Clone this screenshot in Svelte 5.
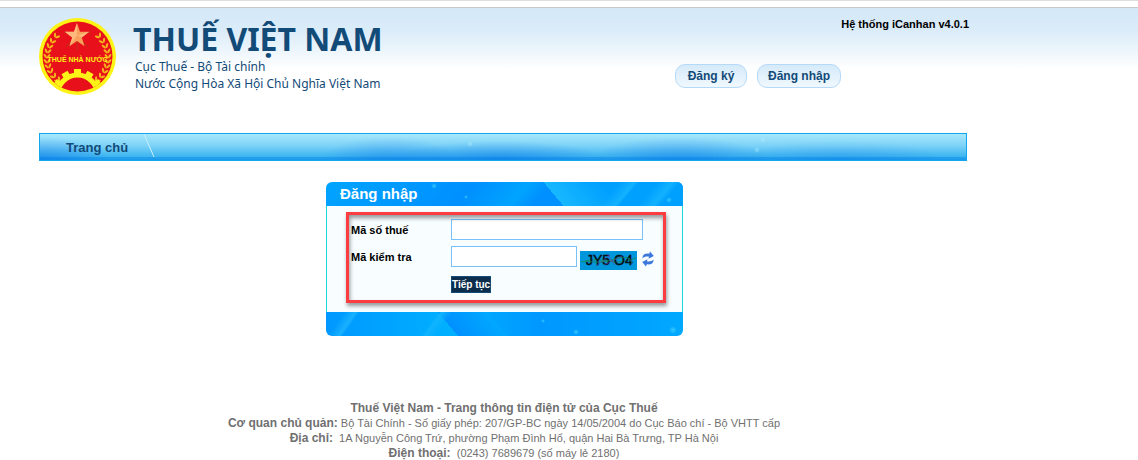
<script>
    let taxCode = '';
    let captcha = '';

    // laurel leaves, one side of the emblem (the other side is mirrored)
    const leaves = [
        [18, 17, 35], [14, 22, 28], [11, 27, 18], [9, 32, 8], [8, 37, 2],
        [8, 42, -6], [9, 47, -14], [11, 52, -24], [14, 57, -34], [18, 61, -42]
    ];
</script>

<div class="strip"></div>
<div class="page">
    <header>
        <svg class="emblem" viewBox="0 0 77 77" role="img" aria-label="Thuế Nhà nước">
            <defs>
                <clipPath id="disc"><circle cx="38.5" cy="38.5" r="35" /></clipPath>
            </defs>
            <circle cx="38.5" cy="38.5" r="38.5" fill="#fdf316" />
            <circle cx="38.5" cy="38.5" r="35" fill="#e8101a" />
            <path d="M38 17L27 29M38 17L49 29M38 17V32M38 17L25 14M38 17L52 14" stroke="#b83418" />
            <path d="M38 5l3 8.700 9.200.1-7.400 5.600 2.700 8.800-7.500-5.300-7.500 5.300 2.700-8.800-7.400-5.600 9.200-.1z" fill="#f8a05c" />
            <path d="M38 5v12.500l-7.500 10.700 2.700-8.800-7.400-5.600 9.200-.1zM38 17.500l12.200-3.700-7.400 5.600z" fill="#fdc48c" opacity=".7" />
            {#each [1, -1] as side}
                <g transform={side === 1 ? '' : 'translate(77 0) scale(-1 1)'} fill="#f6b41c">
                    {#each leaves as [x, y, turn]}
                        <g transform="translate({x} {y}) rotate({turn})">
                            <ellipse cx="-2" cy="0" rx="1.1" ry="2.6" transform="rotate(-35)" />
                            <ellipse cx="2" cy="0" rx="1.1" ry="2.6" transform="rotate(35)" />
                        </g>
                    {/each}
                </g>
            {/each}
            <g clip-path="url(#disc)">
                <circle cx="38.5" cy="77" r="20" fill="none" stroke="#fdf316" stroke-width="5" />
                {#each [-60, -30, 0, 30, 60] as turn}
                    <path d="M35 51h7v5h-7z" fill="#fdf316" transform="rotate({turn} 38.5 77)" />
                {/each}
            </g>
            <text x="38.5" y="44" text-anchor="middle">THUẾ NHÀ NƯỚC</text>
        </svg>
        <div class="brand">
            <h1>THUẾ VIỆT NAM</h1>
            <p>Cục Thuế - Bộ Tài chính</p>
            <p>Nước Cộng Hòa Xã Hội Chủ Nghĩa Việt Nam</p>
        </div>
        <div class="tools">
            <span class="version">Hệ thống iCanhan v4.0.1</span>
            <div class="account">
                <button type="button">Đăng ký</button>
                <button type="button">Đăng nhập</button>
            </div>
        </div>
    </header>

    <nav>
        <a href="#home">Trang chủ</a>
        <svg class="slash" viewBox="0 0 12 24"><path d="M1 0L11 23" stroke="#c9f0fd" /></svg>
    </nav>

    <form class="login" on:submit|preventDefault>
        <h2>Đăng nhập</h2>
        <div class="fields">
            <div class="row">
                <label for="tax-code">Mã số thuế</label>
                <input id="tax-code" class="wide" type="text" bind:value={taxCode} />
            </div>
            <div class="row">
                <label for="captcha">Mã kiểm tra</label>
                <input id="captcha" type="text" bind:value={captcha} />
                <svg class="captcha" viewBox="0 0 57 19">
                    <rect width="57" height="19" fill="#0096dc" />
                    <path d="M1 11Q14 7 27 10T56 7" fill="none" stroke="#158f68" />
                    <text x="6" y="14">JY5 O4</text>
                    <path d="M16 15L30 4M27 3l8 11M24 14l18-9" fill="none" stroke="#5944a8" stroke-width=".7" />
                    <path d="M5 10Q20 13 35 8T52 12" fill="none" stroke="#207f55" stroke-width=".8" />
                </svg>
                <button type="button" class="refresh" aria-label="Đổi mã kiểm tra">
                    <svg viewBox="0 0 12 16">
                        <path d="M.5 7.500C.3 3.700 3 2 7.200 2.700L8 .500 11.800 5 6.500 7.700l.5-2C4.500 5.200 2.200 5.700.5 7.500z" fill="#3c78dc" />
                        <path d="M11.500 8.500c.2 3.800-2.500 5.500-6.700 4.800L4 15.500.2 11l5.300-2.700-.5 2c2.500.5 4.800 0 6.500-1.800z" fill="#3c78dc" />
                    </svg>
                </button>
            </div>
            <div class="row">
                <button type="submit" class="submit">Tiếp tục</button>
            </div>
            <div class="marker"></div>
        </div>
        <div class="base"></div>
    </form>

    <footer>
        <p><b>Thuế Việt Nam - Trang thông tin điện tử của Cục Thuế</b></p>
        <p><b>Cơ quan chủ quản:</b> Bộ Tài Chính - Số giấy phép: 207/GP-BC ngày 14/05/2004 do Cục Báo chí - Bộ VHTT cấp</p>
        <p><b>Địa chỉ:</b>&nbsp; 1A Nguyễn Công Trứ, phường Phạm Đình Hổ, quận Hai Bà Trưng, TP Hà Nội</p>
        <p><b>Điện thoại:</b>&nbsp; (0243) 7689679 (số máy lẻ 2180)</p>
    </footer>
</div>

<style>
    :global(body) {
        margin: 0;
        background: #fff;
        font-family: "Liberation Sans", Arial, sans-serif;
        font-size: 11px;
    }

    .strip {
        height: 6px;
        border-top: 1px solid #dedede;
        border-bottom: 1px solid #c8c8c8;
    }

    .page {
        padding-left: 39px;
        background: linear-gradient(#d3e8f8, #dcecf9 24px, #fff 62px) no-repeat;
    }

    header, nav, footer {
        max-width: 930px;
    }

    header {
        display: flex;
        align-items: flex-start;
        height: 125px;
    }

    .emblem {
        flex: none;
        width: 77px;
        height: 77px;
        margin-top: 10px;
    }

    .emblem text {
        font: bold 7px "Liberation Sans", sans-serif;
        fill: #fdf316;
    }

    .brand {
        margin: 11px 0 0 17px;
        color: #124a78;
        font-family: "Noto Sans", sans-serif;
        white-space: nowrap;
    }

    .brand h1 {
        margin: 0;
        font-size: 32px;
        line-height: 39px;
    }

    .brand p {
        margin: 0 0 0 2px;
        font-size: 12px;
        line-height: 17px;
    }

    .tools {
        display: flex;
        flex-direction: column;
        align-items: flex-end;
        margin-left: auto;
    }

    .version {
        margin-top: 9px;
        line-height: 14px;
        font-weight: bold;
    }

    .account {
        display: flex;
        gap: 10px;
        margin: 33px 128px 0 0;
    }

    .account button {
        min-width: 72px;
        height: 24px;
        padding: 0 10px;
        border: 1px solid #b5daf9;
        border-radius: 10px;
        background: linear-gradient(#d5eafa, #f0f8fe);
        color: #124a78;
        font: bold 12px "Liberation Sans", Arial, sans-serif;
    }

    nav {
        display: flex;
        box-sizing: border-box;
        max-width: 928px;
        height: 28px;
        border: 1px solid #12a6ec;
        background:
            linear-gradient(#0078e600 23px, #0078e655 23px),
            radial-gradient(circle at 430px 10px, #b4f0ff88, #b4f0ff00 3px),
            radial-gradient(circle at 723px 6px, #b4f0ff88, #b4f0ff00 3px),
            radial-gradient(circle at 717px 16px, #b4f0ff88, #b4f0ff00 3px),
            radial-gradient(70px 24px at 0 27px, #0870e888, #0870e800),
            radial-gradient(70px 24px at 350px 27px, #0870e866, #0870e800),
            radial-gradient(110px 20px at 460px 27px, #0870e888, #0870e800),
            radial-gradient(90px 24px at 640px 27px, #0870e877, #0870e800),
            radial-gradient(110px 20px at 800px 27px, #0870e844, #0870e800),
            linear-gradient(#a8e8fb, #7cd2f7 45%, #28acee);
    }

    nav a {
        padding-left: 26px;
        color: #124a78;
        font-size: 13px;
        font-weight: bold;
        line-height: 28px;
        text-decoration: none;
    }

    .slash {
        width: 12px;
        height: 24px;
        margin-left: 15px;
        fill: none;
    }

    .login {
        width: 357px;
        margin: 21px 0 0 287px;
        border-radius: 6px;
        overflow: hidden;
    }

    .login h2, .base {
        height: 24px;
        background:
            radial-gradient(circle at 108px 4px, #34c8ff, #34c8ff00 3px),
            radial-gradient(circle at 140px 15px, #34c8ff, #34c8ff00 2px),
            radial-gradient(circle at 343px 18px, #34c8ff, #34c8ff00 3px),
            linear-gradient(130deg, #fff0 78%, #30ccff66 82%, #fff0 83%, #fff0 88%, #30ccff66 92%, #fff0 94%),
            linear-gradient(50deg, #fff0 63%, #18b8ff 63%, #00a0ff 78%),
            linear-gradient(130deg, #00a4ff, #0090ff 40%, #00a4ff 54%, #0090ff 60%);
    }

    .login h2 {
        margin: 0;
        padding-left: 14px;
        color: #fff;
        font-size: 15px;
        line-height: 24px;
    }

    .base {
        background:
            radial-gradient(circle at 217px 9px, #34c8ff, #34c8ff00 2px),
            radial-gradient(circle at 250px 20px, #34c8ff, #34c8ff00 3px),
            radial-gradient(circle at 347px 18px, #34c8ff, #34c8ff00 4px),
            linear-gradient(125deg, #fff0 5%, #30c4ff88 8%, #fff0 9%, #fff0 30%, #10b4ff 31%, #fff0 34%),
            linear-gradient(50deg, #fff0 35%, #0090ff 35%, #00a8ff 48%, #fff0 48%),
            linear-gradient(90deg, #0098ff, #00b0ff 35%, #0098ff 60%, #00a8ff);
    }

    .fields {
        position: relative;
        display: flex;
        flex-direction: column;
        gap: 6px;
        height: 93px;
        padding: 13px 0 0 24px;
        border: solid #1cd4dc;
        border-width: 0 1px;
        background: #f8fdff;
    }

    .row {
        display: flex;
        align-items: center;
        height: 21px;
    }

    label {
        width: 100px;
        font-weight: bold;
    }

    input {
        box-sizing: border-box;
        width: 126px;
        height: 21px;
        padding: 0 4px;
        border: 1px solid #7ac0f8;
        background: #fff;
        font: inherit;
    }

    .wide {
        width: 192px;
    }

    .captcha {
        width: 57px;
        height: 19px;
        margin: 8px 5px 0 3px;
    }

    .captcha text {
        font: 14px "Liberation Sans", sans-serif;
        fill: #041018;
        stroke: #041018;
        stroke-width: .5;
    }

    .refresh {
        width: 12px;
        height: 16px;
        margin-top: 4px;
        padding: 0;
        border: 0;
        background: none;
    }

    .refresh svg {
        display: block;
    }

    .submit {
        height: 17px;
        margin: 1px 0 0 100px;
        padding: 0;
        border: 1px solid #124a78;
        background: #0c2d4c;
        color: #fff;
        font: bold 10px "Liberation Sans", Arial, sans-serif;
    }

    /* highlight round the form fields */
    .marker {
        position: absolute;
        inset: 6px 16px 9px 19px;
        border: 3px solid #fc3c40;
        box-shadow: 1px 3px 4px #0006, inset 1px 3px 4px #0006;
        pointer-events: none;
    }

    footer {
        margin-top: 65px;
        color: #707070;
        text-align: center;
    }

    footer p {
        margin: 0;
        line-height: 15px;
    }

    footer b {
        font-size: 12px;
    }
</style>
